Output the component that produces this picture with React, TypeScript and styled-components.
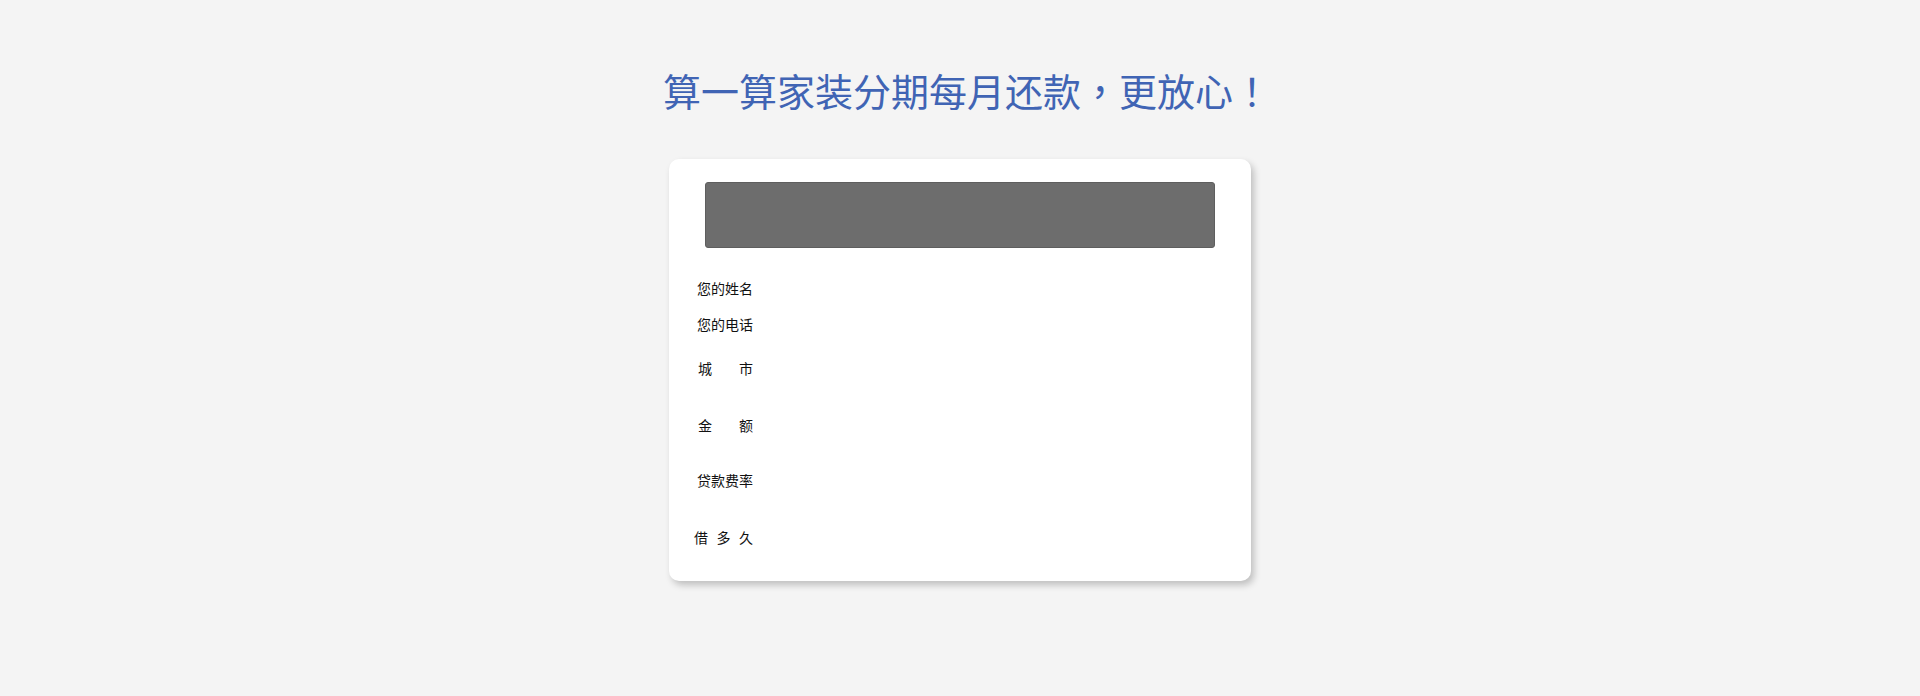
import React from "react";
import styled, { createGlobalStyle } from "styled-components";

const GlobalStyle = createGlobalStyle`
  html, body {
    margin: 0;
    padding: 0;
    background: #f4f4f4;
    font-family: "Noto Sans CJK SC", "Noto Sans", sans-serif;
  }
`;

const Page = styled.div`
  display: flex;
  flex-direction: column;
  align-items: center;
  padding-top: 71px;
  min-height: 696px;
  box-sizing: border-box;
`;

const Title = styled.h1`
  margin: 0 0 0 14px;
  font-size: 38px;
  line-height: 38px;
  font-weight: 400;
  color: #4064b4;
  white-space: nowrap;
`;

const Punct = styled.span`
  font-family: "Noto Sans CJK TC", "Noto Sans CJK SC", sans-serif;
`;

const Card = styled.div`
  margin-top: 50px;
  width: 582px;
  box-sizing: border-box;
  background: #fff;
  border-radius: 10px;
  box-shadow: 3px 4px 7px rgba(0, 0, 0, 0.22);
  padding: 23px 36px 8px;
`;

const Banner = styled.div`
  height: 66px;
  background: #6d6d6d;
  border: 1px solid #5e5e5e;
  border-radius: 3px;
  box-sizing: border-box;
`;

const Form = styled.div`
  display: flex;
  flex-direction: column;
  padding-top: 23px;
`;

const Row = styled.div<{ $h: number }>`
  display: flex;
  align-items: center;
  height: ${(p) => p.$h}px;
`;

const LabelWrap = styled.div`
  width: 56px;
  margin-left: -8px;
  display: flex;
  justify-content: flex-end;
`;

const Label = styled.label<{ $w: number }>`
  flex: none;
  width: ${(p) => p.$w}px;
  display: flex;
  justify-content: space-between;
  font-size: 14px;
  line-height: 20px;
  color: #111;
  white-space: nowrap;
`;

type RowDef = { chars: string[]; h: number; w?: number };

const rows: RowDef[] = [
  { chars: ["您的姓名"], h: 33 },
  { chars: ["您的电话"], h: 39 },
  { chars: ["城", "市"], h: 49, w: 55 },
  { chars: ["金", "额"], h: 66, w: 55 },
  { chars: ["贷款费率"], h: 43 },
  { chars: ["借", "多", "久"], h: 72, w: 59 },
];

export default function App() {
  return (
    <>
      <GlobalStyle />
      <Page>
        <Title>
          算一算家装分期每月还款<Punct>，</Punct>更放心<Punct>！</Punct>
        </Title>
        <Card>
          <Banner />
          <Form>
            {rows.map((r, i) => (
              <Row key={i} $h={r.h}>
                <LabelWrap>
                  <Label $w={r.w ?? 56}>
                    {r.chars.map((c, j) => (
                      <span key={j}>{c}</span>
                    ))}
                  </Label>
                </LabelWrap>
              </Row>
            ))}
          </Form>
        </Card>
      </Page>
    </>
  );
}
